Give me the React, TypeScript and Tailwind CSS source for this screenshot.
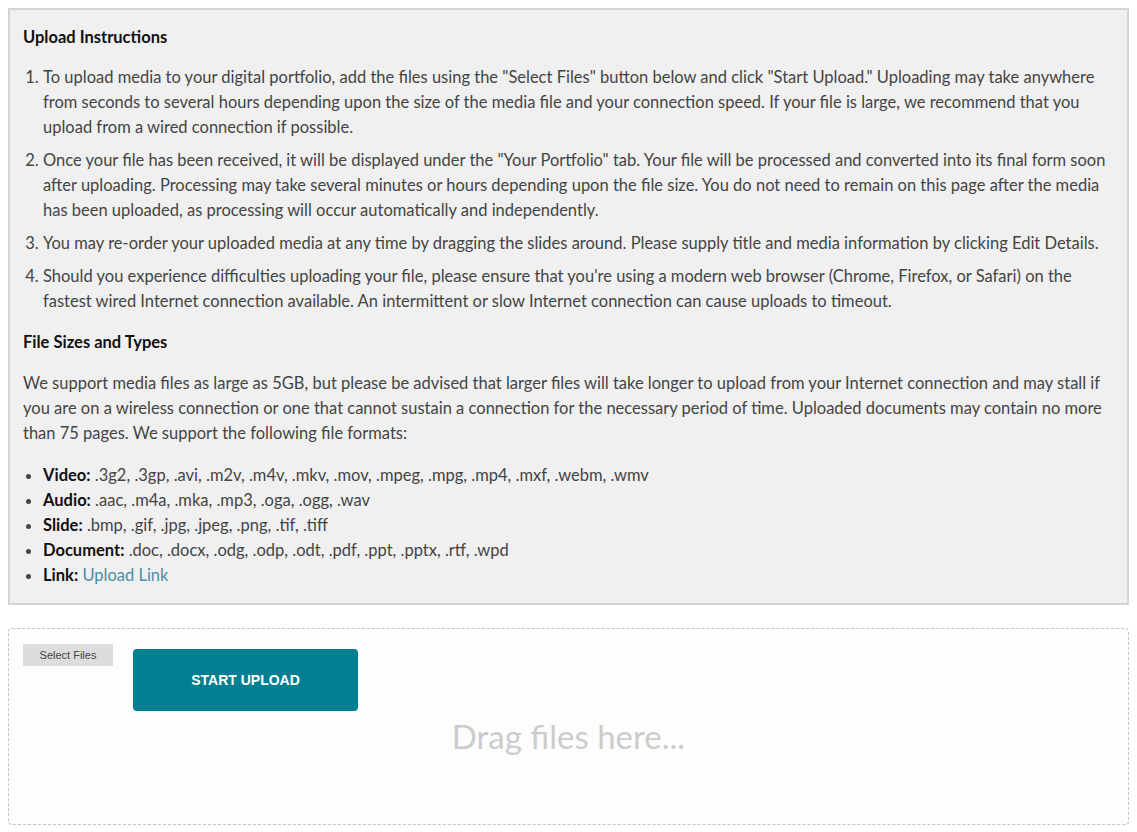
import React from 'react';

const steps = [
  'To upload media to your digital portfolio, add the files using the "Select Files" button below and click "Start Upload." Uploading may take anywhere from seconds to several hours depending upon the size of the media file and your connection speed. If your file is large, we recommend that you upload from a wired connection if possible.',
  'Once your file has been received, it will be displayed under the "Your Portfolio" tab. Your file will be processed and converted into its final form soon after uploading. Processing may take several minutes or hours depending upon the file size. You do not need to remain on this page after the media has been uploaded, as processing will occur automatically and independently.',
  'You may re-order your uploaded media at any time by dragging the slides around. Please supply title and media information by clicking Edit Details.',
  "Should you experience difficulties uploading your file, please ensure that you're using a modern web browser (Chrome, Firefox, or Safari) on the fastest wired Internet connection available. An intermittent or slow Internet connection can cause uploads to timeout.",
];

const formats = [
  { label: 'Video:', value: '.3g2, .3gp, .avi, .m2v, .m4v, .mkv, .mov, .mpeg, .mpg, .mp4, .mxf, .webm, .wmv' },
  { label: 'Audio:', value: '.aac, .m4a, .mka, .mp3, .oga, .ogg, .wav' },
  { label: 'Slide:', value: '.bmp, .gif, .jpg, .jpeg, .png, .tif, .tiff' },
  { label: 'Document:', value: '.doc, .docx, .odg, .odp, .odt, .pdf, .ppt, .pptx, .rtf, .wpd' },
];

export default function App() {
  return (
    <div className="min-h-screen bg-white p-2 font-['Lato',sans-serif] text-[16.5px] leading-[25px] text-[#444]">
      {/* Instructions */}
      <div className="border-2 border-[#d4d4d4] bg-[#f0f0f0] pl-[13px] pr-[12px] pt-[15px] pb-[15px]">
        <h3 className="font-bold text-[#111] leading-[25px]">Upload Instructions</h3>
        <ol className="mt-[15px] list-decimal pl-[20px] space-y-2">
          {steps.map((s, i) => (
            <li key={i}>{s}</li>
          ))}
        </ol>
        <h3 className="mt-[16px] font-bold text-[#111]">File Sizes and Types</h3>
        <p className="mt-[16px]">
          We support media files as large as 5GB, but please be advised that larger files will take longer to upload from your Internet connection and may stall if you are on a wireless connection or one that cannot sustain a connection for the necessary period of time. Uploaded documents may contain no more than 75 pages. We support the following file formats:
        </p>
        <ul className="mt-[17px] list-disc pl-[20px]">
          {formats.map((f) => (
            <li key={f.label}>
              <span className="font-bold text-[#111]">{f.label}</span> {f.value}
            </li>
          ))}
          <li>
            <span className="font-bold text-[#111]">Link:</span>{' '}
            <a href="#" className="text-[#4c8ea6]">Upload Link</a>
          </li>
        </ul>
      </div>

      {/* Drop zone */}
      <div className="mt-[23px] h-[197px] rounded border border-dashed border-[#c4c4c4] bg-[#fdfdfd] px-[14px] pt-[15px]">
        <div className="flex items-start gap-5">
          <button className="h-[22px] w-[90px] bg-[#dddddd] font-['Liberation_Sans',Arial,sans-serif] text-[11px] leading-[18px] text-[#444]">
            Select Files
          </button>
          <button className="mt-[5px] h-[62px] w-[225px] rounded bg-[#037f92] font-['Liberation_Sans',Arial,sans-serif] text-[14px] font-bold text-white">
            START UPLOAD
          </button>
        </div>
        <div className="mt-[4px] text-center text-[33px] leading-[42px] text-[#cccccc]">
          Drag files here...
        </div>
      </div>
    </div>
  );
}
